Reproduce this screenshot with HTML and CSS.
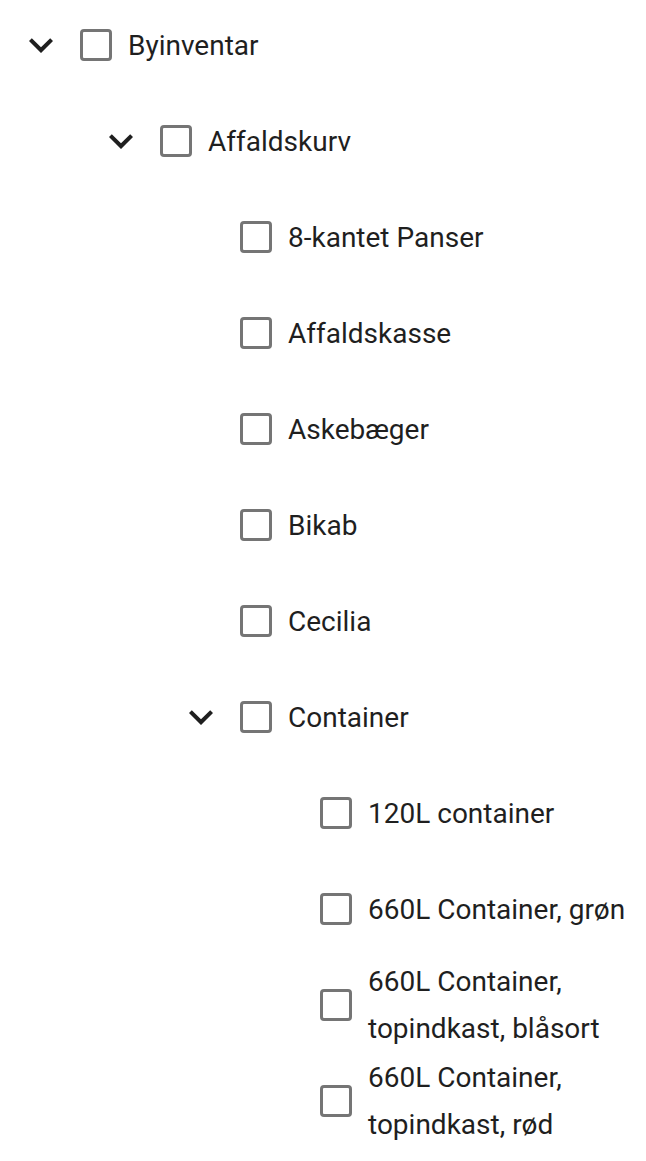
FILE: index.html
```html
<!DOCTYPE html>
<html lang="da">
<head>
<meta charset="utf-8">
<title>Tree</title>
<link rel="stylesheet" href="styles.css">
</head>
<body>
<div class="tree">
  <div class="node lvl0">
    <span class="toggle"><svg viewBox="0 0 24 24" class="chev"><path d="M16.59 8.59L12 13.17 7.41 8.59 6 10l6 6 6-6z"/></svg></span>
    <span class="box"></span><span class="label">Byinventar</span>
  </div>
  <div class="node lvl1">
    <span class="toggle"><svg viewBox="0 0 24 24" class="chev"><path d="M16.59 8.59L12 13.17 7.41 8.59 6 10l6 6 6-6z"/></svg></span>
    <span class="box"></span><span class="label">Affaldskurv</span>
  </div>
  <div class="node lvl2"><span class="toggle"></span><span class="box"></span><span class="label">8-kantet Panser</span></div>
  <div class="node lvl2"><span class="toggle"></span><span class="box"></span><span class="label">Affaldskasse</span></div>
  <div class="node lvl2"><span class="toggle"></span><span class="box"></span><span class="label">Askebæger</span></div>
  <div class="node lvl2"><span class="toggle"></span><span class="box"></span><span class="label">Bikab</span></div>
  <div class="node lvl2"><span class="toggle"></span><span class="box"></span><span class="label">Cecilia</span></div>
  <div class="node lvl2">
    <span class="toggle"><svg viewBox="0 0 24 24" class="chev"><path d="M16.59 8.59L12 13.17 7.41 8.59 6 10l6 6 6-6z"/></svg></span>
    <span class="box"></span><span class="label">Container</span>
  </div>
  <div class="node lvl3"><span class="toggle"></span><span class="box"></span><span class="label">120L container</span></div>
  <div class="node lvl3"><span class="toggle"></span><span class="box"></span><span class="label">660L Container, grøn</span></div>
  <div class="node lvl3"><span class="toggle"></span><span class="box"></span><span class="label">660L Container, topindkast, blåsort</span></div>
  <div class="node lvl3"><span class="toggle"></span><span class="box"></span><span class="label">660L Container, topindkast, rød</span></div>
</div>
</body>
</html>
```
FILE: styles.css
```css
html, body {
  margin: 0;
  padding: 0;
  background: #ffffff;
}
body {
  font-family: Roboto, "Noto Sans", sans-serif;
  font-size: 28px;
  color: #1f1f1f;
}
.tree {
  margin-top: -3px;
  display: flex;
  flex-direction: column;
}
.node {
  display: flex;
  align-items: center;
  min-height: 96px;
}
.lvl1 { padding-left: 80px; }
.lvl2 { padding-left: 160px; }
.lvl3 { padding-left: 240px; }
.toggle {
  flex: 0 0 81px;
  width: 81px;
  display: flex;
  justify-content: center;
  align-items: center;
}
.chev {
  width: 48px;
  height: 48px;
  fill: #1f1f1f;
}
.box {
  flex: 0 0 auto;
  width: 32px;
  height: 32px;
  box-sizing: border-box;
  border: 3.5px solid #757575;
  border-radius: 4px;
  margin-left: -1px;
}
.label {
  margin-left: 16px;
  line-height: 47px;
}
```
